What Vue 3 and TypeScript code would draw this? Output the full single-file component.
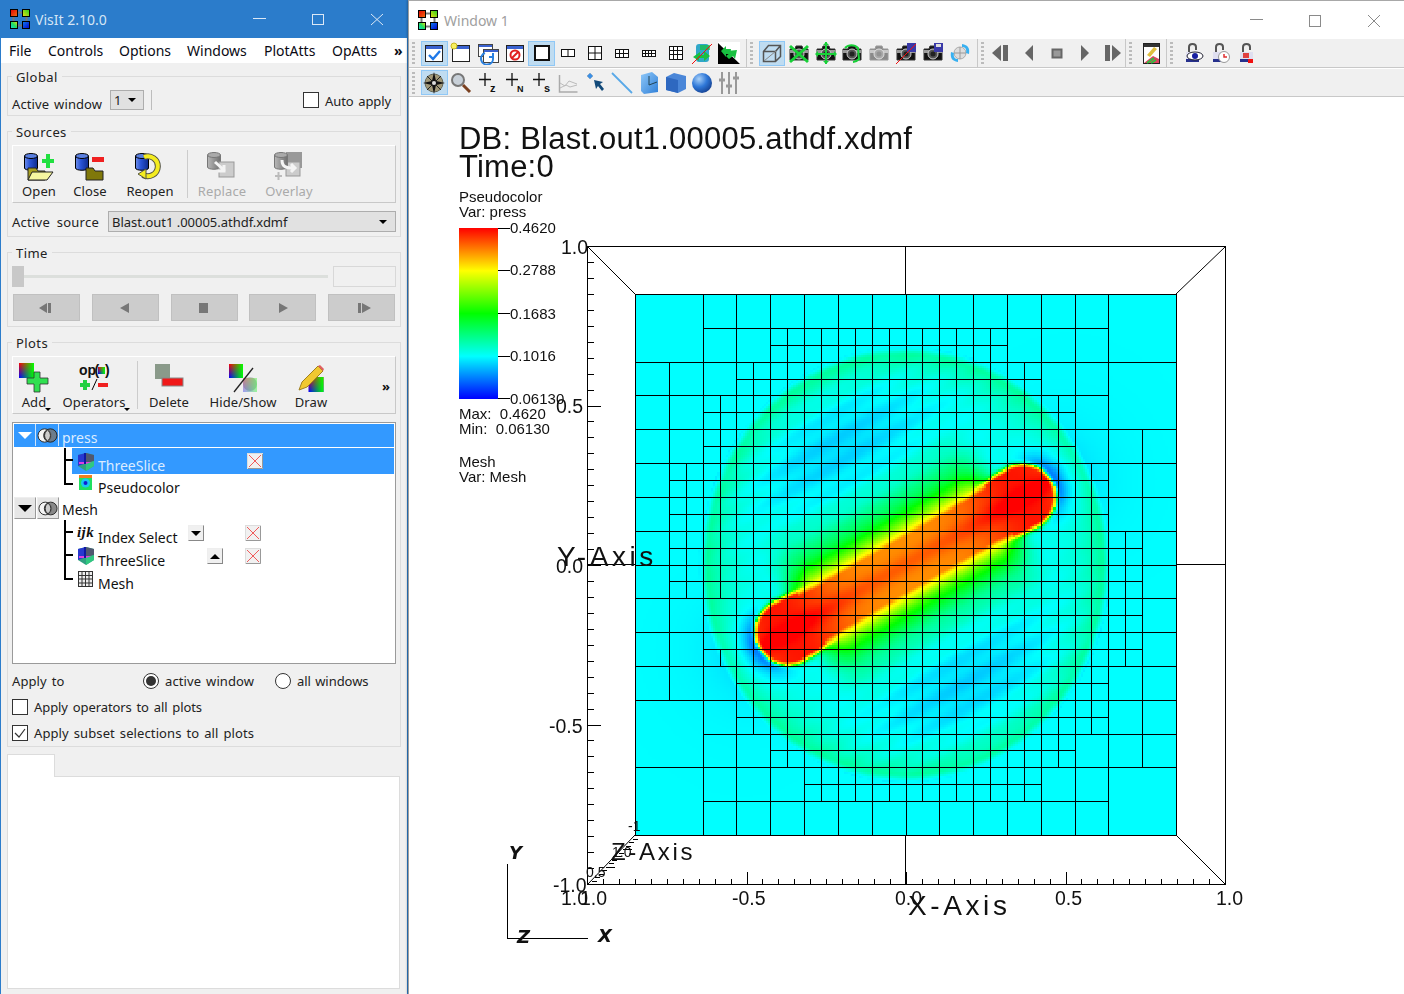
<script setup lang="ts">
import { onMounted, ref } from 'vue'

const heat = ref<HTMLCanvasElement | null>(null)

const X0 = 635
const Y0 = 294
const SZ = 541
const fx = (n: number) => Math.round(X0 + (n * SZ) / 32) + 0.5
const fy = (n: number) => Math.round(Y0 + (n * SZ) / 32) + 0.5

const map = [
  '0011111111111100',
  '0011222222211100',
  '1112222222221100',
  '1122222222222100',
  '1122222222222111',
  '1222222222222211',
  '1222222222222211',
  '1222222222222221',
  '1222222222222221',
  '1112222222222221',
  '1112222222222221',
  '1112222222222211',
  '0012222222222211',
  '0011222222222111',
  '0011122222221100',
  '0011111111111100',
]

function box(x: number, y: number, s: number): string {
  const a = fx(x), b = fx(x + s), c = fy(y), d = fy(y + s)
  return `M${a} ${c}H${b}V${d}H${a}Z`
}

function meshPath(): string {
  let d = ''
  for (let r = 0; r < 16; r++) {
    for (let c = 0; c < 16; c++) {
      const v = map[r][c]
      if (v === '0') {
        if (r % 2 === 0 && c % 2 === 0) d += box(c * 2, r * 2, 4)
      } else if (v === '1') {
        d += box(c * 2, r * 2, 2)
      } else {
        for (let i = 0; i < 2; i++) for (let j = 0; j < 2; j++) d += box(c * 2 + i, r * 2 + j, 1)
      }
    }
  }
  d += `M${fx(4)} ${fy(19)}H${fx(6)}M${fx(4)} ${fy(21)}H${fx(6)}M${fx(5)} ${fy(21)}V${fy(22)}`
  return d
}
const mesh = meshPath()

const ticks: string[] = []
for (let i = 0; i <= 40; i++) {
  const p = Math.round(246 + (i * 638) / 40) + 0.5
  const q = Math.round(587 + (i * 638) / 40) + 0.5
  const len = i % 10 === 0 ? 13 : 6
  if (i > 0 && i < 40) {
    ticks.push(`M587.5 ${p}h${len}`)
    ticks.push(`M${q} 884.5v-${len}`)
  }
}
for (let i = 1; i < 14; i++) {
  const x = 587.5 + i * 3.4
  const y = Math.round(884 - i * 3.5) + 0.5
  ticks.push(`M${x.toFixed(0)}.5 ${y}h${i % 5 === 0 ? 9 : 5}`)
}
const tickPath = ticks.join('')

function smooth(a: number, b: number, x: number): number {
  const t = Math.min(1, Math.max(0, (x - a) / (b - a)))
  return t * t * (3 - 2 * t)
}

function field(px: number, py: number): number {
  const ax = 788, ay = 632, bx = 1023, by = 497
  const L = Math.hypot(bx - ax, by - ay)
  const ux = (bx - ax) / L, uy = (by - ay) / L
  const nx = -uy, ny = ux
  const s = (px - ax) * ux + (py - ay) * uy
  const p = (px - ax) * nx + (py - ay) * ny
  const sc = Math.min(L, Math.max(0, s))
  const d = Math.hypot(s - sc, p)
  const r = Math.hypot(px - 905, py - 564.5)
  const b = Math.max(smooth(L - 50, L - 5, s), 1 - smooth(5, 50, s))
  const edge = 30 + 3 * b
  if (d < edge) {
    const core = 0.86 + 0.12 * Math.max(Math.exp(-((s / 55) ** 2)), Math.exp(-(((s - L) / 55) ** 2))) + 0.05 * Math.exp(-((p / 10) ** 2))
    return core - (core - 0.74) * smooth(b > 0.5 ? 0.88 : 0.78, 1, d / edge)
  }
  let t = 0.25
  const ang = Math.atan2(py - 564.5, px - 905)
  const R = 212 - 6 * Math.cos(2 * ang)
  if (r < R) {
    const e = R - r
    t += 0.145 * Math.exp(-e / 28) * smooth(0, 10, e)
    const bl = Math.exp(-(((Math.abs(p) - 135) / 55) ** 2)) * Math.exp(-(((s - 135) / 125) ** 2))
    t -= 0.055 * bl
    t += 0.012 * Math.sin((2 * Math.PI * p) / 23) * Math.min(1, bl * 1.6 + 0.15)
  }
  const e = d - edge
  t += (1 - b) * 0.49 * Math.exp(-e / 24) + b * 0.49 * Math.exp(-e / 1.5)
  for (const [cx, cy, dx, dy] of [[bx, by, ux, uy], [ax, ay, -ux, -uy]]) {
    const vx = px - cx, vy = py - cy
    const dist = Math.hypot(vx, vy)
    const e2 = dist - 33
    if (e2 > 0) {
      const c = Math.max(0, (vx * dx + vy * dy) / dist)
      t -= (0.2 * Math.exp(-e2 / 9) + 0.08 * Math.exp(-e2 / 30)) * Math.pow(c, 1.5)
    }
  }
  return t
}

function color(t0: number): [number, number, number] {
  const t = Math.max(0, Math.min(1, t0))
  if (t < 0.25) return [0, Math.round((t / 0.25) * 255), 255]
  if (t < 0.5) return [0, 255, Math.round((1 - (t - 0.25) / 0.25) * 255)]
  if (t < 0.75) return [Math.round(((t - 0.5) / 0.25) * 255), 255, 0]
  return [255, Math.round((1 - (t - 0.75) / 0.25) * 255), 0]
}

onMounted(() => {
  const cv = heat.value
  if (!cv) return
  const ctx = cv.getContext('2d')
  if (!ctx) return
  const img = ctx.createImageData(256, 256)
  for (let j = 0; j < 256; j++) {
    for (let i = 0; i < 256; i++) {
      const [r, g, b] = color(field(X0 + ((i + 0.5) * SZ) / 256, Y0 + ((j + 0.5) * SZ) / 256))
      const k = (j * 256 + i) * 4
      img.data[k] = r
      img.data[k + 1] = g
      img.data[k + 2] = b
      img.data[k + 3] = 255
    }
  }
  ctx.putImageData(img, 0, 0)
})
</script>

<template>
  <div class="desktop">
    <svg class="defs" aria-hidden="true">
      <defs>
        <linearGradient id="rbV" x1="0" y1="0" x2="0" y2="1"><stop offset="0" stop-color="#f00" /><stop offset="1" stop-color="#00f" /></linearGradient>
        <linearGradient id="gH" x1="0" y1="0" x2="1" y2="0"><stop offset="0" stop-color="#0f0" stop-opacity="0" /><stop offset="1" stop-color="#0f0" /></linearGradient>
        <linearGradient id="cylB" x1="0" y1="0" x2="1" y2="0"><stop offset="0" stop-color="#6f8fe8" /><stop offset=".4" stop-color="#2a55d8" /><stop offset="1" stop-color="#0c2a8c" /></linearGradient>
        <linearGradient id="cylG" x1="0" y1="0" x2="1" y2="0"><stop offset="0" stop-color="#b8b8b8" /><stop offset="1" stop-color="#707070" /></linearGradient>
        <linearGradient id="blueS" x1="0" y1="0" x2="1" y2="1"><stop offset="0" stop-color="#8fc8f8" /><stop offset="1" stop-color="#2f7fd8" /></linearGradient>
        <linearGradient id="tl" x1="0" y1="0" x2="1" y2="1"><stop offset="0" stop-color="#e00000" /><stop offset="1" stop-color="#f07010" /></linearGradient>
        <linearGradient id="tr" x1="0" y1="1" x2="1" y2="0"><stop offset="0" stop-color="#f0e010" /><stop offset="1" stop-color="#20d020" /></linearGradient>
        <linearGradient id="bl" x1="1" y1="0" x2="0" y2="1"><stop offset="0" stop-color="#f0e010" /><stop offset=".5" stop-color="#20e060" /><stop offset="1" stop-color="#10d0e0" /></linearGradient>
        <linearGradient id="br" x1="0" y1="0" x2="1" y2="1"><stop offset="0" stop-color="#1080f0" /><stop offset="1" stop-color="#0000d0" /></linearGradient>
        <radialGradient id="sph" cx=".35" cy=".3" r=".8"><stop offset="0" stop-color="#a8d0f8" /><stop offset=".5" stop-color="#2f78d8" /><stop offset="1" stop-color="#123a88" /></radialGradient>
        <symbol id="logo" viewBox="0 0 20 20">
          <path d="M7 3.500h6M7 16.500h6M3.500 7v6M16.500 7v6" stroke="#777" stroke-width="2" />
          <rect x=".5" y=".5" width="7" height="7" fill="url(#tl)" stroke="#000" />
          <rect x="12.5" y=".5" width="7" height="7" fill="url(#tr)" stroke="#000" />
          <rect x=".5" y="12.5" width="7" height="7" fill="url(#bl)" stroke="#000" />
          <rect x="12.5" y="12.5" width="7" height="7" fill="url(#br)" stroke="#000" />
        </symbol>
        <symbol id="rb" viewBox="0 0 10 10">
          <rect width="10" height="10" fill="url(#rbV)" /><rect width="10" height="10" fill="url(#gH)" />
        </symbol>
        <symbol id="cyl" viewBox="0 0 14 18">
          <path d="M.5 3v12c0 3 13 3 13 0V3" fill="url(#cylB)" stroke="#000" /><ellipse cx="7" cy="3" rx="6.5" ry="2.5" fill="#5a7fe0" stroke="#000" />
        </symbol>
        <symbol id="cylg" viewBox="0 0 14 18">
          <path d="M.5 3v12c0 3 13 3 13 0V3" fill="url(#cylG)" stroke="#777" /><ellipse cx="7" cy="3" rx="6.5" ry="2.5" fill="#aaa" stroke="#777" />
        </symbol>
        <symbol id="cam" viewBox="0 0 24 24">
          <path d="M3 8h5l1-3h6l1 3h5v11H3z" fill="#111" stroke="#333" />
          <rect x="3" y="9" width="18" height="3" fill="#999" />
          <circle cx="12" cy="13" r="5" fill="#555" stroke="#ccc" /><circle cx="12" cy="13" r="2.5" fill="#222" />
        </symbol>
        <symbol id="win" viewBox="0 0 24 24">
          <rect x="3.5" y="4.5" width="17" height="16" fill="#fff" stroke="#222" /><rect x="4" y="5" width="16" height="3" fill="#3a62d0" />
        </symbol>
        <symbol id="lock" viewBox="0 0 24 24">
          <path d="M8 12V6c0-4 7-4 7 0v3" fill="none" stroke="#555" stroke-width="2" /><rect x="5" y="11" width="13" height="10" fill="#dfdff0" /><rect x="5" y="18" width="13" height="3" fill="#26308c" />
        </symbol>
        <symbol id="x" viewBox="0 0 16 16">
          <rect x=".5" y=".5" width="15" height="15" fill="#f1f1f1" stroke="#ddd" /><path d="M15.5 1v14.5H1" fill="none" stroke="#999" /><path d="M2 2l12 12M14 2L2 14" stroke="#f05a5a" />
        </symbol>
        <symbol id="eye" viewBox="0 0 22 20">
          <circle cx="8" cy="10" r="7" fill="#f4f4f4" stroke="#222" /><circle cx="14" cy="10" r="7" fill="#777" fill-opacity=".85" stroke="#222" /><path d="M11 4.200a7 7 0 0 1 0 11.600a7 7 0 0 1 0-11.600" fill="#ccc" stroke="#222" />
        </symbol>
        <symbol id="three" viewBox="0 0 20 20">
          <path d="M2 3l8-2 8 2v11l-8 5-8-5z" fill="#30a080" /><path d="M2 3l8-2v10l-8 3z" fill="#2838d0" /><path d="M10 1l8 2v6l-8 2z" fill="#505870" /><path d="M3 11h14" stroke="#e040e0" stroke-width="2" /><path d="M10 12l8-3v5l-8 5z" fill="#30c880" /><path d="M9 1v11" stroke="#1018a0" stroke-width="2" />
        </symbol>
      </defs>
    </svg>

    <section class="main">
      <header class="title main-title">
        <svg class="logo" width="20" height="20"><use href="#logo" /></svg>
        <span class="title-text">VisIt 2.10.0</span>
        <div class="wctl">
          <svg width="58" height="38" viewBox="0 0 58 38"><path d="M23 18.500h13" stroke="#dbe8f6" /></svg>
          <svg width="58" height="38" viewBox="0 0 58 38"><rect x="24.500" y="14.500" width="11" height="10" fill="none" stroke="#dbe8f6" /></svg>
          <svg width="58" height="38" viewBox="0 0 58 38"><path d="M25 14l12 11M37 14L25 25" stroke="#dbe8f6" /></svg>
        </div>
      </header>
      <nav class="menu">
        <span style="width:39px">File</span><span style="width:71px">Controls</span><span style="width:68px">Options</span><span style="width:77px">Windows</span><span style="width:68px">PlotAtts</span><span style="width:62px">OpAtts</span><b>»</b>
      </nav>

      <div class="panel">
        <fieldset class="group g-global">
          <div class="gt">Global</div>
          <div class="global-row">
            <span class="lbl aw">Active window</span>
            <div class="combo small"><span>1</span><i class="arrow" /></div>
            <div class="vsep" />
            <div class="check cb-auto" />
            <span class="lbl auto">Auto apply</span>
          </div>
        </fieldset>

        <fieldset class="group g-src">
          <div class="gt">Sources</div>
          <div class="tbar">
            <div class="tool" style="width:52px">
              <svg width="30" height="30" viewBox="0 0 30 30"><use href="#cyl" x="0" y="1" width="14" height="18" /><path d="M4 28V16h8l2 3h7v9z" fill="#a8a020" stroke="#222" /><path d="M4 28l4-8h21l-6 8z" fill="#f6f6a0" stroke="#222" /><path d="M18 7h4V2h4v5h4v4h-4v5h-4v-5h-4z" fill="#20e040" /></svg>
              <span>Open</span>
            </div>
            <div class="tool" style="width:50px">
              <svg width="30" height="30" viewBox="0 0 30 30"><use href="#cyl" x="0" y="1" width="14" height="18" /><path d="M11 28V16h7l2 3h8v9z" fill="#80780a" stroke="#222" /><rect x="17" y="5" width="12" height="5" fill="#f02020" /></svg>
              <span>Close</span>
            </div>
            <div class="tool" style="width:70px">
              <svg width="30" height="30" viewBox="0 0 30 30"><use href="#cyl" x="0" y="1" width="14" height="18" /><path d="M9 5a10 10 0 1 1-1 18" fill="none" stroke="#554" stroke-width="6" /><path d="M9 5a10 10 0 1 1-1 18" fill="none" stroke="#f4ec20" stroke-width="4" /><path d="M3 22l8-5v10z" fill="#f4ec20" stroke="#554" /></svg>
              <span>Reopen</span>
            </div>
            <div class="tsep" />
            <div class="tool dis" style="width:68px">
              <svg width="30" height="30" viewBox="0 0 30 30"><use href="#cylg" x="0" y="0" width="14" height="18" /><rect x="12" y="10" width="15" height="15" fill="#ccc" stroke="#999" /><path d="M8 10l10 9m-1-6v6h-6" fill="none" stroke="#f4f4f4" stroke-width="3" /></svg>
              <span>Replace</span>
            </div>
            <div class="tool dis" style="width:66px">
              <svg width="30" height="30" viewBox="0 0 30 30"><rect x="12" y="0" width="16" height="16" fill="#999" /><rect x="12" y="10" width="14" height="14" fill="#ccc" stroke="#999" /><use href="#cylg" x="0" y="0" width="14" height="18" /><path d="M8 8c0 7 4 8 12 8m-3-4l4 4-4 4" fill="none" stroke="#f4f4f4" stroke-width="3" /><path d="M1 24h7M4.500 20v8" stroke="#bbb" stroke-width="2" /></svg>
              <span>Overlay</span>
            </div>
          </div>
          <div class="src-row">
            <span class="lbl src-l">Active source</span>
            <div class="combo wide"><span>Blast.out1 .00005.athdf.xdmf</span><i class="arrow" /></div>
          </div>
        </fieldset>

        <fieldset class="group g-time">
          <div class="gt">Time</div>
          <div class="slider-row">
            <div class="thumb" /><div class="track" /><div class="tinput" />
          </div>
          <div class="vcr">
            <button><svg width="20" height="12"><path d="M2 6l8-5v10zM11 1h3v10h-3z" fill="#777" /></svg></button>
            <button><svg width="20" height="12"><path d="M5 6l9-5v10z" fill="#777" /></svg></button>
            <button><svg width="20" height="12"><rect x="5" y="1" width="9" height="10" fill="#777" /></svg></button>
            <button><svg width="20" height="12"><path d="M15 6L6 1v10z" fill="#777" /></svg></button>
            <button><svg width="20" height="12"><path d="M6 1h3v10H6zM10 1l9 5-9 5z" fill="#777" /></svg></button>
          </div>
        </fieldset>

        <fieldset class="group g-plots">
          <div class="gt">Plots</div>
          <div class="tbar">
            <div class="tool pt" style="width:42px">
              <svg width="32" height="30" viewBox="0 0 32 30"><use href="#rb" x="1" y="0" width="15" height="15" /><path d="M16 9h6v6h8v6h-8v8h-6v-8H9v-6h7z" fill="#30e050" stroke="#333" stroke-width=".8" /></svg>
              <span>Add<i class="drop" /></span>
            </div>
            <div class="tool pt" style="width:78px">
              <svg width="32" height="30" viewBox="0 0 32 30"><text x="1" y="12" class="opt">op</text><text x="16.500" y="12" class="opt">(</text><use href="#rb" x="20" y="4" width="7" height="7" /><text x="27" y="12" class="opt">)</text><path d="M2 20h3v-3h4v3h3v4H9v3H5v-3H2z" fill="#20d040" /><path d="M14 27l5-11" stroke="#000" /><rect x="20" y="20" width="10" height="4" fill="#f02020" /></svg>
              <span>Operators<i class="drop" /></span>
            </div>
            <div class="tsep ts2" />
            <div class="tool pt" style="width:62px">
              <svg width="30" height="30" viewBox="0 0 30 30"><rect x="1" y="1" width="15" height="15" fill="#8a9a8a" /><rect x="8" y="15" width="21" height="8" fill="#f01818" stroke="#888" /></svg>
              <span>Delete</span>
            </div>
            <div class="tool pt" style="width:86px">
              <svg width="30" height="30" viewBox="0 0 30 30"><use href="#rb" x="1" y="1" width="14" height="14" /><circle cx="22" cy="21" r="7" fill="#c0c8c8" /><use href="#rb" x="15" y="15" width="14" height="14" opacity=".35" /><path d="M6 29L25 5" stroke="#222" stroke-width="1.3" /></svg>
              <span>Hide/Show</span>
            </div>
            <div class="tool pt" style="width:50px">
              <svg width="30" height="30" viewBox="0 0 30 30"><use href="#rb" x="12" y="14" width="16" height="15" /><path d="M3 27l3-8L22 3l5 5L11 24z" fill="#f0c830" stroke="#a08020" /><path d="M22 3l2-1 4 4-1 2z" fill="#e06060" /></svg>
              <span>Draw</span>
            </div>
            <b class="more">»</b>
          </div>

          <div class="tree">
            <div class="pl sel">
              <div class="tbtn sel-b"><i class="tri white" /></div>
              <div class="tbtn sel-b"><svg width="21" height="19"><use href="#eye" /></svg></div>
              <span class="nm">press</span>
            </div>
            <div class="ops">
              <div class="op h26 sel-op"><div class="stub f12" /><svg class="oi i3" width="20" height="20"><use href="#three" /></svg><span class="nm t3">ThreeSlice</span><span /><span /><svg class="xb xsel" width="16" height="16"><use href="#x" /></svg></div>
              <div class="op"><div class="stub l10" /><svg class="oi i-pc" width="13" height="15" viewBox="0 0 13 15"><rect width="13" height="15" fill="#20e060" /><rect y="0" width="13" height="3" fill="#f08020" /><circle cx="6.500" cy="8" r="4.500" fill="#18c8f0" /><circle cx="6.500" cy="8" r="2" fill="#1020d0" /></svg><span class="nm t1">Pseudocolor</span></div>
            </div>
            <div class="pl m2">
              <div class="tbtn"><i class="tri" /></div>
              <div class="tbtn"><svg width="21" height="19"><use href="#eye" /></svg></div>
              <span class="nm">Mesh</span>
            </div>
            <div class="ops">
              <div class="op h25"><div class="stub f12" /><span class="oi ijk">ijk</span><span class="nm t4">Index Select</span><div class="mini"><i class="tri sm" /></div><span /><svg class="xb" width="16" height="16"><use href="#x" /></svg></div>
              <div class="op"><div class="stub f10" /><svg class="oi i3b" width="20" height="20"><use href="#three" /></svg><span class="nm t2">ThreeSlice</span><span /><div class="mini"><i class="tri sm up" /></div><svg class="xb" width="16" height="16"><use href="#x" /></svg></div>
              <div class="op"><div class="stub l11" /><svg class="oi i-mesh" width="15" height="16" viewBox="0 0 15 16"><rect x=".5" y=".5" width="14" height="15" fill="#eee" stroke="#333" /><path d="M.5 4.500h14M.5 8h14M.5 12h14M4 .5v15M7.500 .5v15M11 .5v15" stroke="#333" fill="none" /></svg><span class="nm t2">Mesh</span></div>
            </div>
          </div>

          <div class="apply">
            <span class="lbl a-l">Apply to</span>
            <div class="radio on" /><span class="lbl a-1">active window</span>
            <div class="radio" /><span class="lbl a-2">all windows</span>
          </div>
          <div class="chk-row r1"><div class="check" /><span class="lbl">Apply operators to all plots</span></div>
          <div class="chk-row r2"><div class="check"><svg width="14" height="14"><path d="M2 7l4 4 6-8" fill="none" stroke="#333" stroke-width="1.2" /></svg></div><span class="lbl">Apply subset selections to all plots</span></div>
        </fieldset>

        <div class="tab" />
        <div class="pane" />
      </div>
    </section>

    <section class="viz">
      <header class="title viz-title">
        <svg class="logo2" width="20" height="20"><use href="#logo" /></svg>
        <span class="title-text v">Window 1</span>
        <div class="wctl">
          <svg width="58" height="38" viewBox="0 0 58 38"><path d="M23 18.500h13" stroke="#8a8a8a" /></svg>
          <svg width="58" height="38" viewBox="0 0 58 38"><rect x="24.500" y="14.500" width="11" height="11" fill="none" stroke="#8a8a8a" /></svg>
          <svg width="58" height="38" viewBox="0 0 58 38"><path d="M25 14l12 12M37 14L25 26" stroke="#8a8a8a" /></svg>
        </div>
      </header>

      <div class="tb tb1">
        <i class="grip" />
        <div class="ti on"><svg width="24" height="24"><use href="#win" /><path d="M7 14l4 4 7-8" fill="none" stroke="#1e78e8" stroke-width="2.400" /></svg></div>
        <div class="ti"><svg width="24" height="24"><use href="#win" /><circle cx="5" cy="5" r="3" fill="#f8f060" stroke="#c8b820" /></svg></div>
        <div class="ti"><svg width="24" height="24"><rect x="2.500" y="3.500" width="14" height="12" fill="#fff" stroke="#444" /><rect x="3" y="4" width="13" height="2" fill="#3a62d0" /><rect x="7.500" y="8.500" width="15" height="13" fill="#fff" stroke="#444" /><rect x="8" y="9" width="14" height="2" fill="#3a62d0" /><path d="M9 12a6 6 0 1 0 8 5m0-5v4h-4" fill="none" stroke="#2880e0" stroke-width="2" /></svg></div>
        <div class="ti"><svg width="24" height="24"><use href="#win" /><circle cx="12" cy="14" r="4.500" fill="#fff" stroke="#e02020" stroke-width="2" /><path d="M9 17l6-6" stroke="#e02020" stroke-width="2" /></svg></div>
        <div class="ti on"><svg width="24" height="24"><rect x="5" y="5" width="14" height="14" fill="#fff" stroke="#111" stroke-width="2" /></svg></div>
        <div class="ti"><svg width="24" height="24"><rect x="5.500" y="8.500" width="13" height="7" fill="#fff" stroke="#111" /><path d="M12 9v6" stroke="#111" /></svg></div>
        <div class="ti"><svg width="24" height="24"><rect x="5.500" y="5.500" width="13" height="13" fill="#fff" stroke="#111" /><path d="M12 6v12M6 12h12" stroke="#111" /></svg></div>
        <div class="ti"><svg width="24" height="24"><rect x="5.500" y="8.500" width="13" height="8" fill="#fff" stroke="#111" /><path d="M9.500 9v7M13.500 9v7M6 12.500h12" stroke="#111" /></svg></div>
        <div class="ti"><svg width="24" height="24"><rect x="5.500" y="9.500" width="13" height="6" fill="#fff" stroke="#111" /><path d="M8.500 10v5M11.500 10v5M14.500 10v5M6 12.500h12" stroke="#111" /></svg></div>
        <div class="ti"><svg width="24" height="24"><rect x="5.500" y="5.500" width="13" height="13" fill="#fff" stroke="#111" /><path d="M9.500 6v12M13.500 6v12M6 9.500h12M6 13.500h12" stroke="#111" /></svg></div>
        <div class="ti"><svg width="24" height="24"><rect x="6" y="3" width="13" height="18" rx="3" fill="#30a8c8" /><path d="M3 16l7-5v3h4v-4l6 5-6 5v-3H9v3z" fill="#18c040" /><path d="M10 4h10v5H10z" fill="#18c040" opacity=".7" /><path d="M2 23L22 3" stroke="#f01010" /></svg></div>
        <div class="ti"><svg width="24" height="24"><rect x="1" y="1" width="22" height="22" fill="#fff" /><path d="M1 2l22 21H1z" fill="#000" /><path d="M4 10l5-5v3h5l-1 5H9v3zM20 9l-2 9-2-3-4 3-3-3 4-3-3-2z" fill="#18c040" /></svg></div>
        <div class="sep sa" /><i class="grip" />
        <div class="ti on mg"><svg width="24" height="24"><path d="M3.500 10.500l5-6h12v11l-5 5h-12zM3.500 10.500h12v10M15.500 10.500l5-6" fill="none" stroke="#555" stroke-width="1.500" /><path d="M4 20l12-10" stroke="#888" /></svg></div>
        <div class="ti"><svg width="24" height="24"><use href="#cam" /><path d="M3 5l18 16M21 5L3 21" stroke="#18d038" stroke-width="3" /></svg></div>
        <div class="ti"><svg width="24" height="24"><use href="#cam" /><path d="M12 1v22M2 13h20" stroke="#18d038" stroke-width="2" /><path d="M9 4l3-3 3 3zM9 20l3 3 3-3zM4 10l-3 3 3 3zM20 10l3 3-3 3z" fill="#18d038" /></svg></div>
        <div class="ti"><svg width="24" height="24"><use href="#cam" /><path d="M5 7a9 9 0 0 1 13 0l1 11a9 9 0 0 1-6 3" fill="none" stroke="#18d038" stroke-width="2" /></svg></div>
        <div class="ti"><svg width="24" height="24" opacity=".45"><use href="#cam" /></svg></div>
        <div class="ti"><svg width="24" height="24"><use href="#cam" /><rect x="13" y="2" width="9" height="9" fill="#3a3aa8" /><path d="M2 23L22 3" stroke="#f01010" /></svg></div>
        <div class="ti"><svg width="24" height="24"><use href="#cam" /><rect x="13" y="2" width="9" height="9" fill="#3a3aa8" /><rect x="15" y="3" width="5" height="3" fill="#ddd" /></svg></div>
        <div class="ti"><svg width="24" height="24"><circle cx="12" cy="12" r="6" fill="#ddd" stroke="#aaa" /><path d="M6 12h12M12 6v12" stroke="#999" /><path d="M14 3c6 1 8 4 7 10l-3-1c1-4-1-6-4-6zM10 21c-6-1-8-4-7-10l3 1c-1 4 1 6 4 6z" fill="#38b0f0" /></svg></div>
        <div class="sep sb" /><i class="grip" />
        <div class="ti"><svg width="24" height="24"><path d="M10 4v16L1 12z" fill="#666" /><rect x="12" y="4" width="5" height="16" fill="#666" /></svg></div>
        <div class="ti"><svg width="24" height="24"><path d="M15 4v16l-8-8z" fill="#666" /></svg></div>
        <div class="ti"><svg width="24" height="24"><rect x="7.500" y="8.500" width="9" height="8" fill="#999" stroke="#666" stroke-width="2" /></svg></div>
        <div class="ti"><svg width="24" height="24"><path d="M9 4v16l8-8z" fill="#666" /></svg></div>
        <div class="ti"><svg width="24" height="24"><rect x="6" y="4" width="5" height="16" fill="#666" /><path d="M13 4v16l9-8z" fill="#666" /></svg></div>
        <div class="sep sc" /><i class="grip" />
        <div class="ti"><svg width="24" height="24"><rect x="4.500" y="2.500" width="16" height="20" fill="#fff" stroke="#222" /><rect x="5" y="3" width="15" height="3" fill="#333" /><path d="M5 22l9-7 6 3v4z" fill="#e04060" /><path d="M8 22l7-5M12 22l5-3" stroke="#30c040" stroke-width="2" /><path d="M8 14l7-8 3 2-7 8z" fill="#e0c040" /></svg></div>
        <div class="sep sd" /><i class="grip" />
        <div class="ti ml3"><svg width="24" height="24"><use href="#lock" /><ellipse cx="14" cy="15" rx="8" ry="4" fill="#fff" stroke="#223" /><circle cx="14" cy="15" r="3" fill="#1820a0" /></svg></div>
        <div class="ti"><svg width="24" height="24"><use href="#lock" /><circle cx="16" cy="16" r="5.500" fill="#fff" stroke="#999" /><path d="M16 13v3h3" stroke="#e03030" fill="none" stroke-width="1.500" /></svg></div>
        <div class="ti"><svg width="24" height="24"><use href="#lock" /><rect x="8" y="12" width="6" height="5" fill="#e04040" /><rect x="13" y="18" width="5" height="4" fill="#f01010" /></svg></div>
      </div>

      <div class="tb tb2">
        <i class="grip" />
        <div class="ti on"><svg width="24" height="24"><circle cx="12" cy="12" r="9" fill="#a09878" stroke="#665" /><path d="M12 1l2 9 9 2-9 2-2 9-2-9-9-2 9-2z" fill="#111" /><path d="M5 5l14 14M19 5L5 19" stroke="#222" /><circle cx="12" cy="12" r="2" fill="#ddd" /></svg></div>
        <div class="ti"><svg width="24" height="24"><circle cx="9" cy="9" r="6" fill="#c8d0d8" stroke="#777" stroke-width="2" /><path d="M14 14l7 7" stroke="#7a4020" stroke-width="3" /></svg></div>
        <div class="ti"><svg width="24" height="24"><path d="M9 2v13M3 8.500h12" stroke="#111" stroke-width="1.300" /><text x="14" y="21" class="ptx">z</text></svg></div>
        <div class="ti"><svg width="24" height="24"><path d="M9 2v13M3 8.500h12" stroke="#111" stroke-width="1.300" /><text x="14" y="21" class="ptx sm">N</text></svg></div>
        <div class="ti"><svg width="24" height="24"><path d="M9 2v13M3 8.500h12" stroke="#111" stroke-width="1.300" /><text x="14" y="21" class="ptx">s</text></svg></div>
        <div class="ti"><svg width="24" height="24"><path d="M3.500 4v17h18" fill="none" stroke="#aaa" stroke-width="1.500" /><path d="M4 12l5 3 4-5 8 3M4 17l6-3 4 2 7-2" fill="none" stroke="#bbb" /></svg></div>
        <div class="ti"><svg width="24" height="24"><path d="M4 5l3-3 3 3-3 3z" fill="#3a90e8" stroke="#8ac" /><path d="M11 9l2 9 2-3 4 5 2-2-4-5 3-2z" fill="#124a7a" /></svg></div>
        <div class="ti"><svg width="24" height="24"><path d="M2 2l20 20" stroke="#58a8e8" stroke-width="1.800" /></svg></div>
        <div class="ti"><svg width="24" height="24"><path d="M4 4l11-3 6 5v15l-14 2-3-3z" fill="url(#blueS)" /><path d="M12 14V5M12 14l8-3" stroke="#245" /></svg></div>
        <div class="ti"><svg width="24" height="24"><path d="M2 6l8-4 12 3v13l-8 4-12-3z" fill="#4a86d8" /><path d="M2 6l12 3v13l-12-3z" fill="#2e68c0" /></svg></div>
        <div class="ti"><svg width="24" height="24"><circle cx="12" cy="12" r="10" fill="url(#sph)" /></svg></div>
        <div class="ti"><svg width="24" height="24"><path d="M5 1v22M12 1v22M19 1v22" stroke="#999" stroke-width="2" /><path d="M2 9h6M9 15h6M16 7h6" stroke="#999" stroke-width="3" /></svg></div>
      </div>

      <div class="plot">
        <canvas ref="heat" class="heat" width="256" height="256" />
        <svg class="plot-svg" width="995" height="897" viewBox="409 97 995 897">
          <text x="459" y="148.500" class="t-title">DB: Blast.out1.00005.athdf.xdmf</text>
          <text x="459" y="176.500" class="t-title">Time:0</text>
          <text x="459" y="202" class="t-l">Pseudocolor</text>
          <text x="459" y="217" class="t-l">Var: press</text>
          <rect x="459" y="228" width="39" height="171" fill="url(#ctab)" />
          <defs>
            <linearGradient id="ctab" x1="0" y1="0" x2="0" y2="1"><stop offset="0" stop-color="#f00" /><stop offset=".25" stop-color="#ff0" /><stop offset=".5" stop-color="#0f0" /><stop offset=".75" stop-color="#0ff" /><stop offset="1" stop-color="#00f" /></linearGradient>
          </defs>
          <path class="ln" d="M498 228.500h12M498 270.500h12M498 313.500h12M498 356.500h12M498 398.500h12" />
          <text x="510" y="233" class="t-l">0.4620</text>
          <text x="510" y="275" class="t-l">0.2788</text>
          <text x="510" y="319" class="t-l">0.1683</text>
          <text x="510" y="361" class="t-l">0.1016</text>
          <text x="510" y="404" class="t-l">0.06130</text>
          <text x="459" y="419" class="t-l">Max:&nbsp; 0.4620</text>
          <text x="459" y="434" class="t-l">Min:&nbsp; 0.06130</text>
          <text x="459" y="467" class="t-l">Mesh</text>
          <text x="459" y="482" class="t-l">Var: Mesh</text>

          <path class="ln" :d="mesh" />
          <path class="ln" d="M587.500 246.500H1225.500V884.500H587.500ZM905.500 246.500V294M905.500 835V884M587.500 564.500H635M1176 564.500H1225" />
          <path class="ln" :d="tickPath" />
          <g class="diag">
            <path d="M588 247L635 294M1225 247L1176 294M1225 884L1176 835M588 884L635 835" />
          </g>

          <text x="561" y="254" class="t-a">1.0</text>
          <text x="556" y="413" class="t-a">0.5</text>
          <text x="556" y="573" class="t-a">0.0</text>
          <text x="549" y="733" class="t-a">-0.5</text>
          <text x="553" y="892" class="t-a">-1.0</text>
          <text x="561" y="905" class="t-a">1.0</text>
          <text x="580" y="905" class="t-a">1.0</text>
          <text x="732" y="905" class="t-a">-0.5</text>
          <text x="895" y="905" class="t-a">0.0</text>
          <text x="1055" y="905" class="t-a">0.5</text>
          <text x="1216" y="905" class="t-a">1.0</text>
          <text x="586" y="877" class="t-z">0.5</text>
          <text x="612" y="857" class="t-z">1.0</text>
          <text x="628" y="831" class="t-z">-1</text>

          <text x="557" y="566" class="t-ax big">Y-Axis</text>
          <text x="908" y="915" class="t-ax big">X-Axis</text>
          <text x="611" y="860" class="t-ax">Z-Axis</text>

          <path class="ln" d="M507.500 864V938.500H588" />
          <text x="509" y="859" class="t-tr">Y</text>
          <text x="598" y="942" class="t-tr">X</text>
          <text x="517" y="943" class="t-tr">Z</text>
        </svg>
      </div>
    </section>
  </div>
</template>

<style>
html, body { margin: 0; background: #fff; }
</style>

<style scoped>
.desktop { display: flex; width: 1404px; height: 994px; overflow: hidden; font-family: "Noto Sans", sans-serif; color: #111; background: #fff; }
.defs { position: absolute; width: 0; height: 0; }

.main { width: 408px; height: 994px; box-sizing: border-box; background: #f0f0f0; border-left: 1px solid #2b7ccb; border-right: 1px solid #2b7ccb; flex: none; }
.title { display: flex; align-items: center; height: 38px; font-size: 14px; }
.main-title { background: #2b7ccb; color: #d5e5f5; }
.logo { margin-left: 9px; }
.title-text { margin-left: 5px; }
.wctl { margin-left: auto; display: flex; padding-right: 3px; }
.wctl svg { display: block; }

.menu { height: 25px; background: #fff; display: flex; align-items: center; font-size: 14px; padding-left: 8px; color: #0a0a14; }
.menu span { display: block; }
.menu b { font-weight: 700; font-size: 14px; margin-left: 0; }

.panel { padding: 13px 0 0 6px; }
.group { display: block; margin: 15px 0 0; padding: 0 4px; border: 1px solid #dcdcdc; width: 394px; box-sizing: border-box; min-inline-size: 0; }
.g-global { height: 40px; margin-top: 0; }
.g-src { height: 106px; }
.g-time { height: 75px; }
.g-plots { height: 405px; }
.gt { margin: -8px 0 0 0; padding: 0 4px; width: fit-content; background: #f0f0f0; font-size: 13px; line-height: 16px; height: 16px; letter-spacing: .4px; color: #222; }
.lbl { font-size: 13px; line-height: 16px; letter-spacing: .1px; word-spacing: 1.5px; color: #222; white-space: nowrap; }

.global-row { display: flex; align-items: flex-start; }
.aw { width: 98px; margin-top: 11px; flex: none; }
.combo { display: flex; align-items: center; box-sizing: border-box; background: #e1e1e1; border: 1px solid #adadad; font-size: 13px; color: #222; }
.combo.small { width: 34px; height: 20px; margin-top: 5px; padding-left: 3px; justify-content: space-between; padding-right: 7px; }
.combo.wide { width: 288px; height: 21px; padding: 0 8px 0 3px; justify-content: space-between; letter-spacing: -.02px; }
.arrow { width: 0; height: 0; border-left: 4px solid transparent; border-right: 4px solid transparent; border-top: 4px solid #000; }
.vsep { width: 1px; height: 20px; background: #bdbdbd; margin: 5px 0 0 7px; }
.check { width: 16px; height: 16px; box-sizing: border-box; border: 1px solid #333; background: #fff; flex: none; display: flex; align-items: center; justify-content: center; }
.cb-auto { margin: 7px 0 0 151px; }
.auto { margin: 8px 0 0 6px; letter-spacing: -.1px; }

.tbar { display: flex; align-items: flex-start; height: 58px; width: 384px; box-sizing: border-box; margin-top: 5px; border: 1px solid; border-color: #fff #c8c8c8 #c8c8c8 #fff; }
.tool { display: flex; flex-direction: column; align-items: center; padding-top: 6px; flex: none; }
.tool svg { display: block; }
.tool span { font-size: 13px; line-height: 16px; letter-spacing: .1px; margin-top: 1px; color: #222; white-space: nowrap; }
.tool.dis span { color: #aaa; }
.tsep { width: 1px; height: 48px; margin: 4px 0 0 2px; background: #ccc; flex: none; }
.ts2 { margin-left: 4px; }
.more { margin: 20px 0 0 auto; padding-right: 5px; font-size: 13px; font-weight: 700; }
.drop { display: inline-block; width: 0; height: 0; border-left: 3px solid transparent; border-right: 3px solid transparent; border-top: 3px solid #000; margin: 0 -5px 0 -1px; vertical-align: -4px; }
.opt { font: 700 14px "Liberation Sans", sans-serif; fill: #111; }

.src-row { display: flex; align-items: center; margin-top: 8px; }
.src-l { width: 96px; flex: none; letter-spacing: .25px; word-spacing: 3px; }

.slider-row { display: flex; align-items: center; margin-top: 5px; height: 21px; }
.thumb { width: 12px; height: 21px; background: #c8c8c8; flex: none; }
.track { width: 304px; height: 3px; background: #dcdfdc; flex: none; }
.tinput { width: 63px; height: 21px; box-sizing: border-box; margin-left: 5px; border: 1px solid #d8d8d8; background: #f0f0f0; flex: none; }
.vcr { display: flex; justify-content: space-between; width: 382px; margin: 7px 0 0 1px; }
.vcr button { width: 67px; height: 27px; padding: 0; box-sizing: border-box; background: #ccc; border: 1px solid #c0c0c0; display: flex; align-items: center; justify-content: center; }

.tree { width: 384px; height: 242px; box-sizing: border-box; border: 1px solid #9a9a9a; background: #fff; margin-top: 8px; padding: 1px 1px 0 1px; }
.nm { font-size: 14px; line-height: 20px; padding-top: 7px; display: block; white-space: nowrap; }
.t1 { padding-top: 4px; }
.t2 { padding-top: 6px; }
.t3 { padding-top: 8px; }
.t4 { padding-top: 8px; }
.pl { display: flex; height: 23px; width: 380px; margin-bottom: 1px; }
.pl .nm { padding: 4px 0 0 2px; }
.pl.m2 { margin-bottom: 0; }
.pl.m2 .nm { padding-top: 3px; }
.pl.sel { background: #3399ff; color: #dcecff; }
.tbtn { width: 22px; height: 22px; box-sizing: border-box; margin-right: 1px; background: #e6e6e6; border: 1px solid #ddd; border-color: #eee #999 #999 #eee; display: flex; align-items: center; justify-content: center; flex: none; }
.tbtn.sel-b { background: #3399ff; border: none; border-right: 1px solid #cfe4fa; }
.tri { width: 0; height: 0; border-left: 7px solid transparent; border-right: 7px solid transparent; border-top: 7px solid #000; }
.tri.white { border-top-color: #fff; }
.tri.sm { border-left-width: 5px; border-right-width: 5px; border-top-width: 5px; }
.tri.sm.up { border-top: none; border-bottom: 5px solid #000; }
.ops { margin-left: 50px; }
.op { display: grid; grid-template-columns: 8px 26px 90px 19px 38px 20px; height: 23px; width: 330px; align-items: start; }
.h26 { height: 26px; }
.h25 { height: 25px; }
.h25 .mini, .h25 .xb { margin-top: 5px; }
.sel-op { background: #3399ff; margin-left: 8px; width: 322px; grid-template-columns: 26px 90px 19px 38px 20px; color: #dcecff; }
.sel-op .stub { position: absolute; margin-left: -8px; width: 8px; height: 26px; }
.stub { position: relative; align-self: stretch; height: 23px; }
.stub::before, .stub::after { content: ""; position: absolute; background: #000; left: 0; }
.stub::before { width: 2px; top: 0; }
.stub::after { height: 2px; width: 9px; }
.f12::before { bottom: -1px; height: 26px; }
.f12::after { top: 11px; }
.f10::before { height: 23px; }
.f10::after { top: 9px; }
.l10::before { height: 11px; }
.l10::after { top: 9px; }
.l11::before { height: 12px; }
.l11::after { top: 10px; }
.oi { display: block; }
.i3 { margin: 4px 0 0 4px; }
.i3b { margin: 1px 0 0 4px; }
.i-pc { margin: 1px 0 0 7px; }
.i-mesh { margin: 3px 0 0 6px; }
.ijk { font: italic 700 15px "Liberation Serif", serif; margin: 4px 0 0 5px; letter-spacing: .4px; }
.mini { width: 16px; height: 16px; box-sizing: border-box; margin-top: 3px; background: #f0f0f0; border: 1px solid; border-color: #eee #888 #888 #eee; display: flex; align-items: center; justify-content: center; }
.xb { display: block; margin-top: 3px; }
.xsel { margin: 5px 0 0 2px; }

.apply { display: flex; align-items: center; margin-top: 9px; height: 16px; }
.a-l { width: 131px; flex: none; }
.a-1 { width: 110px; flex: none; }
.a-2 { letter-spacing: -.05px; word-spacing: 1px; }
.radio { width: 16px; height: 16px; box-sizing: border-box; border-radius: 50%; border: 1px solid #333; background: #fff; margin-right: 6px; position: relative; flex: none; }
.radio.on::after { content: ""; position: absolute; inset: 2px; border-radius: 50%; background: #333; }
.chk-row { display: flex; align-items: center; gap: 6px; }
.r1 { margin-top: 10px; letter-spacing: -.1px; }
.r1 .lbl { letter-spacing: -.08px; }
.r2 { margin-top: 10px; }

.tab { width: 48px; height: 23px; box-sizing: border-box; margin-top: 7px; background: #fff; border: 1px solid #dcdcdc; border-bottom: none; position: relative; z-index: 1; }
.pane { width: 393px; height: 213px; box-sizing: border-box; margin-top: -1px; background: #fff; border: 1px solid #dcdcdc; }

.viz { flex: 1; min-width: 0; border-left: 1px solid #9f9f9f; box-shadow: -1px 0 2px rgba(0,0,0,.25); position: relative; }
.viz-title { height: 39px; box-sizing: border-box; border-top: 1px solid #a8a8a8; background: #fff; color: #a0a0a0; }
.logo2 { margin-left: 9px; }
.title-text.v { margin-left: 6px; }

.tb { display: flex; align-items: center; background: #f0f0f0; box-sizing: border-box; }
.tb1 { height: 29px; border-bottom: 1px solid #c8c8c8; margin-bottom: 1px; }
.tb2 { height: 28px; border-bottom: 1px solid #c8c8c8; }
.grip { width: 3px; height: 22px; margin: 0 6px 0 3px; flex: none; background: repeating-linear-gradient(#bbb 0 2px, transparent 2px 4px); }
.ti { width: 26.8px; height: 25px; box-sizing: border-box; display: flex; align-items: center; justify-content: center; flex: none; border: 1px solid transparent; }
.ti svg { display: block; }
.ti.on { background: #bfdcf1; border-color: #90c8f6; }
.sep { width: 1px; height: 29px; background: #c8c8c8; flex: none; }
.sa { margin-left: 3px; }
.sb { margin-left: 4px; }
.sc { margin-left: 1px; }
.sd { margin-left: 1px; }
.ml3 { margin-left: 1px; }
.ptx { font: 700 11px "Liberation Sans", sans-serif; fill: #111; }
.ptx.sm { font-size: 9px; }

.plot { position: relative; height: 897px; background: #fff; }
.heat { position: absolute; left: 226px; top: 197px; width: 541px; height: 541px; image-rendering: pixelated; }
.plot-svg { position: absolute; left: 0; top: 0; display: block; }
.ln { fill: none; stroke: #000; stroke-width: 1; shape-rendering: crispEdges; }
.diag path { fill: none; stroke: #000; stroke-width: 1; }
.plot-svg text { font-family: "Liberation Sans", sans-serif; fill: #111; }
.t-title { font-size: 31px; letter-spacing: .22px; }
.t-l { font-size: 15px; }
.t-a { font-size: 19.5px; }
.t-z { font-size: 14px; }
.t-ax { font-size: 24px; letter-spacing: 2.7px; }
.t-ax.big { font-size: 28px; letter-spacing: 3.6px; }
.plot-svg .t-tr { font: italic 700 18px "DejaVu Sans", sans-serif; fill: #111; }
</style>
